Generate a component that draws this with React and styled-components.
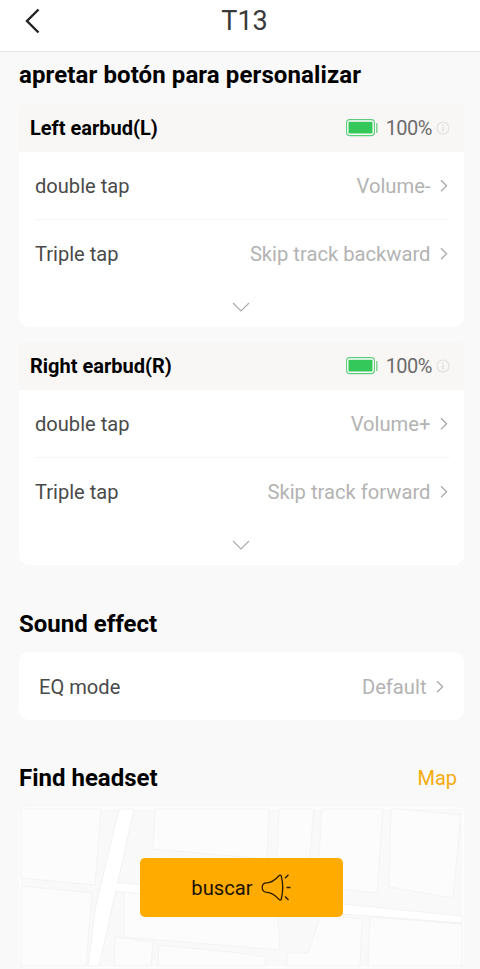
import React from 'react';
import styled, { createGlobalStyle } from 'styled-components';

const GlobalStyle = createGlobalStyle`
  * {
    box-sizing: border-box;
  }

  body {
    margin: 0;
    background-color: #f9f9f9;
    font-family: Roboto, sans-serif;
  }
`;

const Screen = styled.div`
  height: 969px;
  overflow: hidden;
  background-color: #f9f9f9;
`;

const TopBar = styled.header`
  display: grid;
  grid-template-columns: 72px 1fr 72px;
  align-items: center;
  height: 52px;
  padding: 0 0 9px;
  background-color: #fff;
  border-bottom: 1px solid #e8e8e8;
`;

const BackButton = styled.button`
  display: flex;
  padding: 0 0 0 25px;
  background: none;
  border: none;
`;

const PageTitle = styled.h1`
  margin: 0;
  padding-left: 9px;
  text-align: center;
  font-size: 27px;
  line-height: 32px;
  font-weight: 400;
  color: #3a3a3a;
`;

const Content = styled.main`
  padding: 0 16px 0 19px;
`;

const SectionHeader = styled.div`
  display: flex;
  justify-content: space-between;
  align-items: center;
  height: ${({ $first }) => ($first ? 52 : 87)}px;
  padding: ${({ $first, $top }) => ($first ? '0 7px 7px 0' : `${$top || 29}px 7px 0 0`)};
`;

const SectionTitle = styled.h2`
  margin: 0;
  font-size: 24px;
  line-height: 28px;
  font-weight: 700;
  letter-spacing: ${({ $tracking }) => $tracking || 0}px;
  color: #000;
`;

const MapLink = styled.span`
  font-size: 20px;
  line-height: 28px;
  color: #f5ab0c;
`;

const Card = styled.section`
  background-color: #fff;
  border-radius: ${({ $flatTop }) => ($flatTop ? '3px 3px 10px 10px' : '10px')};
  overflow: hidden;

  & + & {
    margin-top: 15px;
  }
`;

const CardHeader = styled.div`
  display: flex;
  align-items: center;
  justify-content: space-between;
  height: 48px;
  padding: 0 14px 0 11px;
  background-color: #f9f7f6;
`;

const EarbudName = styled.h3`
  margin: 0;
  font-size: 20px;
  line-height: 24px;
  font-weight: 700;
  color: #000;
`;

const Battery = styled.div`
  display: flex;
  align-items: center;
  font-size: 20px;
  line-height: 24px;
  letter-spacing: -0.5px;
  color: #6c6c6c;
`;

const BatteryLevel = styled.span`
  margin: 0 4px 0 8px;
`;

const Rows = styled.div`
  padding: 0 14px 0 16px;
`;

const Row = styled.div`
  display: flex;
  align-items: center;
  justify-content: space-between;
  height: 68px;
  padding: ${({ $inset }) => ($inset ? '2px 4px 0 4px' : '0')};

  &:not(:last-child) {
    height: 67px;
  }

  & + & {
    border-top: 1px solid #f7f7f7;
  }
`;

const RowLabel = styled.span`
  font-size: 20.1px;
  line-height: 24px;
  color: #4a4a4a;
`;

const RowValue = styled.span`
  display: flex;
  align-items: center;
  gap: 9px;
  padding-right: 2.5px;
  font-size: 20.2px;
  line-height: 24px;
  color: #b3b3b3;
`;

const Expand = styled.div`
  display: flex;
  justify-content: center;
  align-items: center;
  height: 40px;
  padding-right: 1px;
`;

const MapCard = styled.section`
  position: relative;
  display: flex;
  justify-content: center;
  align-items: center;
  height: 161px;
  background-color: #fdfdfd;
  border-radius: 8px;
  overflow: hidden;
`;

const MapDrawing = styled.svg`
  position: absolute;
  inset: 0;
`;

const SearchButton = styled.button`
  position: relative;
  display: flex;
  justify-content: center;
  align-items: center;
  gap: 8px;
  width: 203px;
  height: 59px;
  padding: 1px 1px 0 0;
  background-color: #ffab00;
  border: none;
  border-radius: 5px;
  font-family: inherit;
  font-size: 20.2px;
  line-height: 24px;
  color: #1a1200;
`;

const BackIcon = () => (
  <svg width="16" height="26" viewBox="0 0 16 26" fill="none">
    <path d="M13.5 1.5L2 13l11.5 11.5" stroke="#222" strokeWidth="2.4" />
  </svg>
);

const ChevronRight = () => (
  <svg width="8" height="14" viewBox="0 0 8 14" fill="none">
    <path d="M1 1.2L6.6 6.7 1 12.2" stroke="#aaa" strokeWidth="1.3" />
  </svg>
);

const ChevronDown = () => (
  <svg width="18" height="10" viewBox="0 0 18 10" fill="none">
    <path d="M1 1l8 8 8-8" stroke="#a9aaae" strokeWidth="1.1" />
  </svg>
);

const BatteryIcon = () => (
  <svg width="32" height="18" viewBox="0 0 32 18" fill="none">
    <rect x="0.6" y="0.6" width="27.8" height="16" rx="3" fill="#fff" stroke="#5fcb7b" strokeWidth="1.1" />
    <rect x="2.5" y="2.8" width="24" height="11.8" rx="0.8" fill="#34c759" />
    <path d="M30.8 4v10" stroke="#7fd596" strokeWidth="1.5" />
  </svg>
);

const InfoIcon = () => (
  <svg width="14" height="14" viewBox="0 0 14 14" fill="none">
    <circle cx="7" cy="7" r="6" stroke="#e2e0df" strokeWidth="1.1" />
    <path d="M7 3.2v1.4M7 5.8v5" stroke="#dcdad9" strokeWidth="1.3" />
  </svg>
);

const HornIcon = () => (
  <svg width="30" height="28" viewBox="0 0 30 28" fill="none">
    <path
      d="M1.2 13.600C1.200 10.500 3.200 8.900 5.800 8.900c5 0 8.500-3 12.200-7.100.9-1 2-.8 2.300.4 1.700 6.800 1.700 16 0 22.800-.3 1.200-1.400 1.400-2.300.4-3.700-4.100-7.200-7.100-12.200-7.100-2.600 0-4.600-1.600-4.600-4.700z"
      stroke="#2b1c00"
      strokeWidth="1.300"
    />
    <path d="M24 4.200l3.500-3.400M25.500 13.500h4M24 22.600l3.500 3.400" stroke="#2b1c00" strokeWidth="1.400" />
  </svg>
);

const blocks = [
  '21,809 101,809 95,885 21,878',
  '21,886 92,893 86,966 21,966',
  '155,809 153,849 267,859 269,809',
  '279,809 277,862 309,864 314,809',
  '322,809 317,886 377,893 383,809',
  '391,809 389,887 453,898 461,815 400,809',
  '124,891 124,937 280,950 277,903',
  '115,937 153,942 151,966 114,966',
  '159,945 240,953 266,957 265,966 158,966',
  '321,915 362,919 360,966 286,966 288,953 308,953',
  '370,917 462,924 462,966 368,966',
];

const StreetMap = () => (
  <MapDrawing width="445" height="161" viewBox="19 807 445 161">
    <path d="M21 809H462V966H21z" fill="#f9f9f9" />
    {blocks.map(points => (
      <polygon key={points} points={points} fill="#fcfcfc" stroke="#f3f3f3" />
    ))}
    <path d="M113 882L343 904L462 916V923L343 914L113 891z" fill="#fff" stroke="#f2f2f2" />
    <path d="M119 809L96 905L88 966H99L134 809z" fill="#fff" stroke="#f2f2f2" />
    <path d="M109 884.500h14v5h-14z" fill="#fff" />
  </MapDrawing>
);

const earbuds = [
  {
    name: 'Left earbud(L)',
    battery: '100%',
    actions: [
      { label: 'double tap', value: 'Volume-' },
      { label: 'Triple tap', value: 'Skip track backward' },
    ],
  },
  {
    name: 'Right earbud(R)',
    battery: '100%',
    actions: [
      { label: 'double tap', value: 'Volume+' },
      { label: 'Triple tap', value: 'Skip track forward' },
    ],
  },
];

const SettingRow = ({ label, value, inset }) => (
  <Row $inset={inset}>
    <RowLabel>{label}</RowLabel>
    <RowValue>
      {value}
      <ChevronRight />
    </RowValue>
  </Row>
);

const App = () => (
  <Screen>
    <GlobalStyle />
    <TopBar>
      <BackButton aria-label="Back">
        <BackIcon />
      </BackButton>
      <PageTitle>T13</PageTitle>
    </TopBar>

    <Content>
      <SectionHeader $first>
        <SectionTitle $tracking={0.1}>apretar botón para personalizar</SectionTitle>
      </SectionHeader>

      {earbuds.map(earbud => (
        <Card key={earbud.name} $flatTop>
          <CardHeader>
            <EarbudName>{earbud.name}</EarbudName>
            <Battery>
              <BatteryIcon />
              <BatteryLevel>{earbud.battery}</BatteryLevel>
              <InfoIcon />
            </Battery>
          </CardHeader>
          <Rows>
            {earbud.actions.map(action => (
              <SettingRow key={action.label} {...action} />
            ))}
          </Rows>
          <Expand>
            <ChevronDown />
          </Expand>
        </Card>
      ))}

      <SectionHeader $top={31}>
        <SectionTitle>Sound effect</SectionTitle>
      </SectionHeader>
      <Card>
        <Rows>
          <SettingRow label="EQ mode" value="Default" inset />
        </Rows>
      </Card>

      <SectionHeader>
        <SectionTitle>Find headset</SectionTitle>
        <MapLink>Map</MapLink>
      </SectionHeader>
      <MapCard>
        <StreetMap />
        <SearchButton>
          buscar
          <HornIcon />
        </SearchButton>
      </MapCard>
    </Content>
  </Screen>
);

export default App;
